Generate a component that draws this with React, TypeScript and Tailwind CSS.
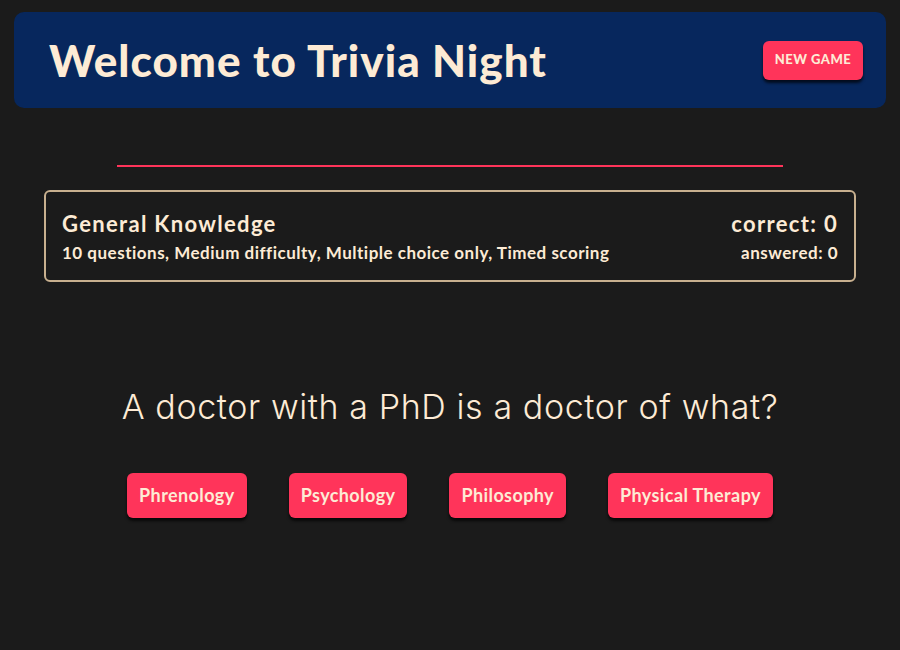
import React from 'react';

const answers = ['Phrenology', 'Psychology', 'Philosophy', 'Physical Therapy'];

const App: React.FC = () => {
  return (
    <div className="min-h-[650px] bg-[#1b1b1b] pt-3 font-['Lato',sans-serif] text-[#fdebd5]">
      {/* Header */}
      <div className="mx-[14px] flex h-[96px] items-center justify-between rounded-[10px] bg-[#07275d] pl-[35px] pr-[23px]">
        <h1 className="text-[44px] font-black tracking-[1px]">Welcome to Trivia Night</h1>
        <button className="h-[39px] w-[100px] rounded-md bg-[#ff345a] text-[13px] font-black uppercase tracking-[0.5px] shadow-[0_3px_3px_rgba(0,0,0,0.7)]">
          New Game
        </button>
      </div>

      <div className="mx-auto mt-[57px] h-[2px] w-[74%] bg-[#ff345a]" />

      {/* Category card */}
      <div className="mx-[44px] mt-[23px] flex items-center justify-between rounded-md border-2 border-[#c8b08f] px-4 pb-[13px] pt-[17px]">
        <div>
          <div className="text-[22px] font-bold leading-[30px] tracking-[0.06em]">General Knowledge</div>
          <div className="text-[17px] font-bold leading-[28px] tracking-[0.5px]">
            10 questions, Medium difficulty, Multiple choice only, Timed scoring
          </div>
        </div>
        <div className="text-right">
          <div className="text-[22px] font-bold leading-[30px] tracking-[0.06em]">correct: 0</div>
          <div className="text-[17px] font-bold leading-[28px] tracking-[0.5px]">answered: 0</div>
        </div>
      </div>

      {/* Question */}
      <p className="mt-[104px] text-center font-['Inter',sans-serif] text-[34px] font-light leading-[42px] tracking-[0.6px]">
        A doctor with a PhD is a doctor of what?
      </p>

      <div className="mt-[45px] flex justify-center gap-[42px]">
        {answers.map((a) => (
          <button
            key={a}
            className="h-[45px] rounded-md bg-[#ff345a] px-[12px] text-[18px] font-bold tracking-[0.4px] shadow-[0_3px_3px_rgba(0,0,0,0.7)]"
          >
            {a}
          </button>
        ))}
      </div>
    </div>
  );
};

export default App;
